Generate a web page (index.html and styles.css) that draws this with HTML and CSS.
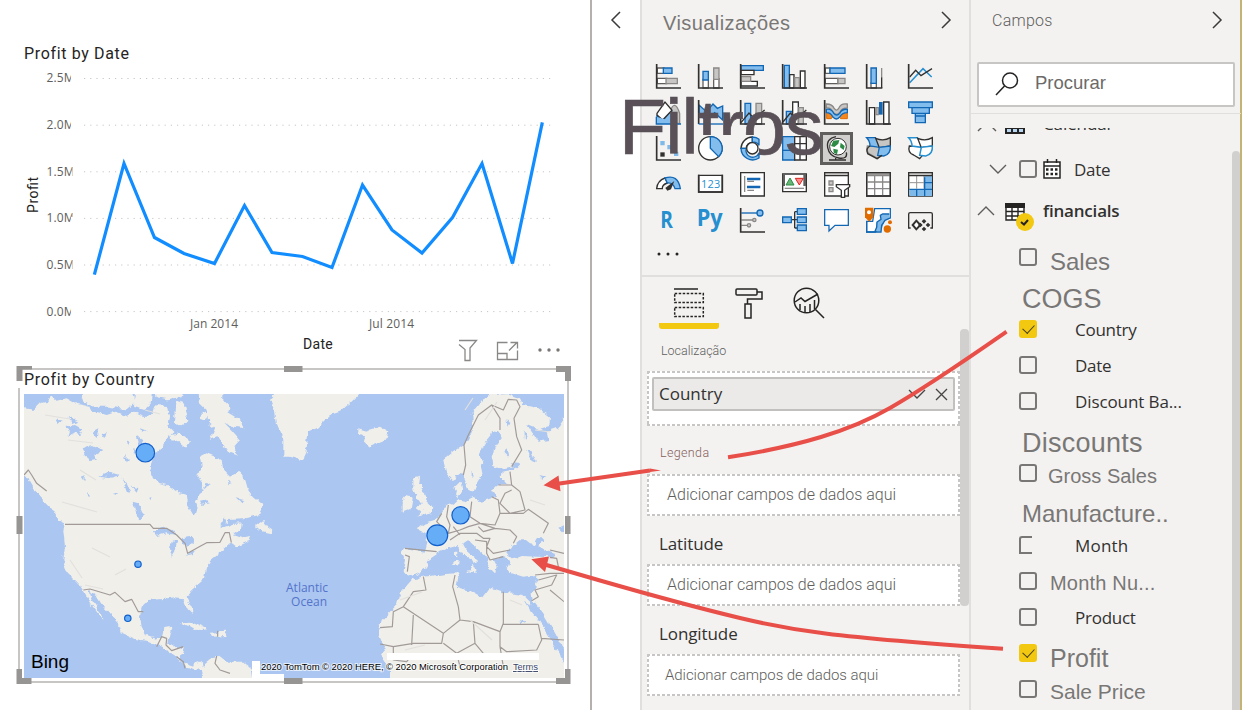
FILE: index.html
```html
<!DOCTYPE html>
<html lang="pt">
<head>
<meta charset="utf-8">
<title>Profit by Country</title>
<link rel="stylesheet" href="styles.css">
</head>
<body>
<div class="app">
<main class="canvas">
  <h2 class="visual-title">Profit by Date</h2>
  <svg class="chart" width="590" height="266" viewBox="0 66 590 266">
    <clipPath id="lab"><path d="M40 66h31v53h0v46h1.500v52h-1.500v35h1.500v22h-1.500v50h-31z"/></clipPath>
    <g class="grid"><path d="M84 78.500H554M84 125.200H554M84 171.800H554M84 218.400H554M84 265H554M84 311.600H554"/></g>
    <g class="tick" clip-path="url(#lab)">
      <text x="46.500" y="82" textLength="28">2.5M</text><text x="46.500" y="129" textLength="28">2.0M</text><text x="46.500" y="176" textLength="28">1.5M</text><text x="46.500" y="222" textLength="28">1.0M</text><text x="46.500" y="269" textLength="28">0.5M</text><text x="46.500" y="316" textLength="28">0.0M</text>
    </g>
    <g class="tick"><text x="190" y="328" textLength="48">Jan 2014</text><text x="369" y="328" textLength="45">Jul 2014</text></g>
    <text class="axis" transform="translate(38 213) rotate(-90)" textLength="36">Profit</text>
    <path class="series" d="M94.800 273L124 163.500 154.500 237.500 184 253.500 214.500 263.500 244.500 205.500 272 252.500 302.500 256.500 332 267.500 362.500 185 392 230 422 253 452.500 217.500 482 163.500 512.500 263.500 542 124"/>
  </svg>
  <div class="visual-foot">
    <span class="axis-title">Date</span>
    <span class="visual-tools">
      <svg width="20" height="24" viewBox="0 0 20 24"><path d="M1 2.500H18.500L12 10V22.500H7V11.500L1 6.500"/></svg>
      <svg width="24" height="24" viewBox="0 0 24 24"><path d="M11.500 4.500H1.500V21.500H21.500V12.500M1.500 15.500H11V21.500M13 12.500L21 4.500M14.500 4.500H21.500V10.500"/></svg>
      <svg class="dots" width="24" height="24" viewBox="0 0 24 24"><circle cx="2" cy="12" r="1.700"/><circle cx="11" cy="12" r="1.700"/><circle cx="20" cy="12" r="1.700"/></svg>
    </span>
  </div>
  <section class="map-visual">
    <h2 class="map-title">Profit by Country</h2>
    <svg class="map" width="540" height="284" viewBox="24 394 540 284">
      <defs><filter id="rough" x="-5%" y="-5%" width="110%" height="110%" color-interpolation-filters="sRGB"><feTurbulence type="fractalNoise" baseFrequency=".14" numOctaves="3" seed="4"/><feDisplacementMap in="SourceGraphic" scale="6" xChannelSelector="R" yChannelSelector="G"/></filter></defs>
      <rect class="sea" x="24" y="394" width="540" height="284"/>
      <g filter="url(#rough)">
      <g transform="translate(10 360) scale(.33333)">
        <path class="land" d="M30 140L70 150 90 130 110 125 125 108 140 122 170 115 200 132 240 140 245 152 290 165 320 155 350 168 370 155 400 168 425 165 440 135 470 138 480 170 475 200 490 215 470 240 455 265 435 280 420 320 425 350 445 372 480 380 510 400 530 405 535 440 550 465 560 450 555 420 575 400 580 370 565 350 575 320 570 290 590 280 615 290 635 300 640 330 660 350 685 335 700 350 710 385 730 410 760 435 750 465 700 478 655 480 630 505 670 492 692 490 690 510 670 525 700 535 720 530 715 545 680 560 664 548 640 570 600 600 590 630 585 655 545 690 530 710 545 740 548 762 530 745 520 715 490 712 460 717 415 720 395 740 390 770 395 800 410 825 440 835 455 830 462 805 487 800 480 830 470 850 490 862 522 860 512 890 515 905 550 917 575 905 580 925 565 930 530 920 500 890 470 870 430 850 380 840 335 820 330 800 300 765 270 730 255 705 235 692 245 720 265 750 287 782 270 768 245 735 225 700 205 670 175 640 160 600 165 560 160 510 165 490 145 480 120 440 90 410 70 385 50 350 30 345Z"/>
        <path class="land" d="M215 110L225 90H365L375 125 350 148 300 140 250 140 220 125ZM375 90H430L425 125 400 150 372 140ZM500 125L525 135 535 180 515 200 495 190 497 150ZM575 155L592 160 590 178 575 175ZM480 225L510 220 540 245 530 262 505 240 485 245ZM435 90H520L515 112 470 118 440 112ZM565 90H640L640 120 665 145 650 155 690 180 705 205 670 200 640 185 670 215 690 240 670 262 690 285 650 270 625 230 600 240 615 205 595 190 590 150 570 130ZM735 500L760 480 775 500 790 510 785 520 750 512ZM805 90H880V300L860 295 830 260 800 190 795 150 780 120ZM510 787L540 785 592 808 570 810 530 797ZM600 818L645 815 650 828 605 830ZM575 920L600 900 625 885 650 905 700 905 725 925 730 960H580ZM385 178L430 172 440 188 395 196Z"/>
        <path class="lake" d="M165 200L195 195 218 208 210 225 190 220 175 228 180 212ZM215 265L245 255 280 270 255 285 260 300 235 303 225 285ZM245 215L265 205 260 235ZM265 350L300 335 335 345 300 355ZM335 350L350 370 362 400 350 395ZM365 380L385 385 380 398ZM368 425L385 430 402 465 385 480 375 450ZM430 515L460 500 485 510 500 525 470 520 440 528ZM485 545L505 540 495 575 485 590 480 565ZM515 535L545 530 552 550 530 560 520 550ZM520 588L560 570 550 582ZM570 425L595 420 600 430 575 435ZM640 470L648 480 645 500 635 495ZM680 415L702 420 695 430ZM175 170L205 185 190 192ZM135 175L158 182 145 195ZM380 225L400 240 390 262ZM345 285L360 300 350 310ZM275 220L290 212 285 235ZM230 400L240 405 235 410ZM310 400L325 402 315 408ZM600 375L590 368 580 385ZM655 360L665 372 655 376ZM350 240L362 248 356 262ZM390 205L410 212 396 218ZM415 412L425 408 422 420ZM370 265L382 275 372 285ZM215 350L228 345 222 360Z"/>
      </g>
      <g transform="translate(290 360) scale(.33333)">
        <path class="land" d="M-20 90H220L180 130 150 155 120 165 80 205 55 215 50 265 35 300 0 290 -20 290ZM205 205L230 212 270 200 295 215 290 240 240 260 222 245 225 230 205 220ZM370 355L390 350 388 370 398 375 392 390 405 400 410 425 430 440 425 460 380 470 395 455 380 445 392 430 380 410 370 390ZM335 425L350 405 368 410 362 445 335 455Z"/>
        <path class="land" d="M840 165L822 175 800 205 770 215 775 240 745 245 725 215 712 195 745 208 778 198 780 172 745 145 700 135 690 115 660 102 605 105 580 115 560 140 545 160 550 195 535 235 525 250 490 275 460 300 470 345 485 360 505 350 520 338 525 360 535 390 550 395 560 370 575 345 570 320 580 310 567 285 585 250 605 225 610 210 630 215 635 235 615 260 605 290 610 315 640 325 690 315 665 330 635 335 632 355 650 375 625 375 605 390 615 410 575 425 545 412 520 425 503 420 505 405 490 385 510 365 517 385 500 425 490 435 475 430 455 460 430 480 400 490 380 505 408 520 412 550 405 575 345 565 335 580 345 600 338 635 365 650 385 640 410 625 415 600 440 583 450 573 480 560 500 555 515 580 545 600 560 630 553 640 545 630 550 612 570 605 530 570 520 550 535 540 555 560 590 590 595 620 615 640 620 620 610 600 640 590 660 602 650 625 665 640 700 650 735 645 745 660 725 700 730 720 760 760 790 810 820 865 840 870V960H300V930L275 890 285 870 265 820 275 780 320 735 330 700 370 655 400 650 470 642 500 640 505 650 500 680 550 695 580 712 600 685 640 698 700 705 720 725 740 770 770 810 790 855 822 905 840 905V165ZM530 632L550 630 548 640 530 635ZM493 600L503 600 502 615 493 615ZM495 575H502V592L495 590Z"/>
        <path class="lake" d="M650 582L665 555 685 538 705 538 720 550 735 552 745 535 765 535 745 558 775 575 800 582 785 592 740 590 700 588 665 595ZM805 500L830 490V525ZM665 310L690 312 680 325ZM712 270L725 275 738 305 725 300ZM745 345L765 350 760 360ZM640 275L650 265 655 290ZM700 208L710 225 702 240ZM705 722L725 735 750 775 785 825 822 880V900L795 860 760 800 725 755ZM690 780L705 785 695 790ZM545 330L552 345 545 352ZM650 180L658 190 652 200Z"/>
      </g></g>
      <g class="border" transform="translate(10 360) scale(.33333)"><path d="M42 345L55 330 65 345 80 370 110 393M165 493H420L430 505 470 505 500 525 525 550 533 580 565 562 590 548 630 547 645 518 658 518 664 548M220 690L240 687 300 705 315 697 345 725 365 718 385 755H400M440 860L455 830 470 835 468 855 485 872 520 860M500 890L520 905 525 925M620 888L615 910 630 930 660 940M623 812V830"/></g>
      <g class="border" transform="translate(290 360) scale(.33333)"><path d="M520 345L527 315 522 255 535 225 550 195 565 165 605 135 630 175 630 210M605 135L640 150 655 118 680 120 690 140 672 175 680 230 695 270 665 320M660 335L665 375 625 375M665 375L690 395 705 450 660 460 630 430 645 400 665 390M605 410L625 420 630 460 615 495 570 490 540 470 545 425M630 460L700 460 715 448 775 490 760 520M475 435L470 470 480 495 475 520 440 485 455 460M475 520L510 510 535 500 570 490 615 505 660 510 680 530 670 550M480 540L510 520 560 520 580 535 600 535 590 560 610 580 660 570M555 540L590 545 590 580 600 600 640 590M490 500L510 525M565 500L580 515 615 505M345 565L440 575M345 585L358 590 352 635M400 650L408 690 370 695 340 740 310 755 307 800 270 803M340 740L460 820 510 780 505 740 488 680 495 645M510 780L550 785 630 815 640 790V695M640 793H745M630 815V860L640 920M460 820L455 850 370 850 310 860 270 852M370 765L365 855M550 785L555 850 500 880 460 850M745 793L755 840 740 870 650 875 630 860M780 570L822 580M780 592L800 595 805 620 822 635M735 645L780 640 822 640M745 660L800 645 785 675 735 690 745 710 725 722M780 690L822 725M755 835L822 840M500 880L510 920M555 850L580 880 640 885M310 860V900L350 905 370 880"/></g>
      <g class="terrain"><path d="M70 560l12 18M92 548l18 9M85 585l18 4M62 502l35 10M80 470l16 10M68 440l25 3M45 415l25 4M115 575l11-6M145 410l15 4M465 410l8-12M535 430l15 2M485 420l12-18M530 500l15 5M400 600l22-8M470 620l22 20M405 650l20-5M510 600l12 5"/></g>
      <g class="bubble"><circle cx="145.300" cy="452.700" r="9.300"/><circle cx="138" cy="564.200" r="3.200"/><circle cx="127.800" cy="618.300" r="3.200"/><circle cx="460.600" cy="515.300" r="8.700"/><circle cx="437.300" cy="535.300" r="10.400"/></g>
      <text class="ocean" x="286" y="592" textLength="42">Atlantic</text><text class="ocean" x="291" y="606" textLength="36">Ocean</text>
      <text class="bing" x="31" y="668" textLength="38">Bing</text>
      <path class="patch" d="M252 661h8v13h24v4h-32zM387 653h152v7h-152z"/>
      <text class="credit" x="261" y="670" textLength="247">2020 TomTom © 2020 HERE, © 2020 Microsoft Corporation</text>
      <text class="credit terms" x="513" y="670" textLength="25">Terms</text>
    </svg>
    <svg class="handles" width="556" height="320" viewBox="16 365 556 320"><path class="mask" d="M18 371.500h4v16.500h-4z"/><path d="M16.500 366H32v3.500H22.500V381H16.500ZM284 366h18.500v6H284ZM556 366h15v15h-6v-9h-9ZM16.500 516H22.500v18h-6ZM565 516h5.500v18H565ZM16.500 669H22v9H31.500v6H16.500ZM284 678h18.500v6H284ZM565 669h5.500v15H556v-6h9Z"/></svg>
  </section>
</main>

<aside class="filter-rail">
  <svg width="12" height="18" viewBox="0 0 12 18"><path class="chev" d="M10 1L2 9 10 17"/></svg>
  <span class="filter-title">Filtros</span>
</aside>

<section class="viz">
  <header class="viz-head"><h1>Visualizações</h1><svg width="12" height="18" viewBox="0 0 12 18"><path class="chev" d="M2 1L10 9 2 17"/></svg></header>
  <div class="icons">
    <svg viewBox="0 0 75 75"><path class="w" d="M4 12h20v16H4zM4 43h28v16H4z"/><path class="b" d="M22 12h26v16H22z"/><path class="g" d="M30 43h34v16H30z"/><path class="ax" d="M2 0V72H75"/></svg>
    <svg viewBox="0 0 75 75"><path class="w" d="M15 46h16v26H15zM47 44h16v28H47z"/><path class="b" d="M15 22h16v26H15z"/><path class="g" d="M47 12h16v34H47z"/><path class="ax" d="M2 0V72H75"/></svg>
    <svg viewBox="0 0 75 75"><path class="b" d="M3 5h67v14H3z"/><path class="w k" d="M3 19h39v13H3zM3 52h49v14H3z"/><path class="g" d="M3 38h29v14H3z"/><path class="ax" d="M2 0V72H75"/></svg>
    <svg viewBox="0 0 75 75"><path class="b" d="M7 4h15v68H7z"/><path class="w k" d="M23 32h13v40H23zM55 21h14v51H55z"/><path class="g" d="M38 41h14v31H38z"/><path class="ax" d="M2 0V72H75"/></svg>
    <svg viewBox="0 0 75 75"><path class="w" d="M4 12h14v16H4zM4 43h38v16H4z"/><path class="b" d="M18 12h45v16H18z"/><path class="g" d="M42 43h21v16H42z"/><path class="ax" d="M2 0V72H75"/></svg>
    <svg viewBox="0 0 75 75"><path class="w" d="M15 57h16v15H15z"/><path class="b" d="M15 12h16v46H15z"/><path class="g" d="M47 12v28"/><path class="k" fill="none" d="M47 40v32"/><path class="ax" d="M2 0V72H49"/></svg>
    <svg viewBox="0 0 75 75"><path class="ln" d="M5 56L45 14 71 39"/><path class="k" fill="none" d="M5 39L23 19 39 35 72 14"/><path class="ax" d="M2 0V72H75"/></svg>

    <svg viewBox="0 0 75 75"><path class="g" d="M42 70V35Q56-5 71 40V70Z"/><path class="b" d="M3 48L20 62 45 32 58 50V70H3Z"/><path class="w k" d="M3 40L27 6 48 31 20 60 3 45Z"/><path class="b" fill="none" d="M1 50V72H75"/></svg>
    <svg viewBox="0 0 75 75"><path class="b" d="M3 15L25 35 45 12 58 25 74 18V60L50 38 25 62 3 43Z"/><path class="ax" d="M2 0V72"/><path class="bln" d="M2 72H75"/></svg>
    <svg viewBox="0 0 75 75"><path class="b" d="M15 10h17v62H15z"/><path class="g" d="M48 10h17v30H48z"/><path class="w" d="M48 40h17v32H48z"/><path class="k" fill="none" d="M3 68L27 39 43 56 74 30"/><path class="ax" d="M2 0V72H75"/></svg>
    <svg viewBox="0 0 75 75"><path class="b" d="M13 34h17v38H13z"/><path class="w k" d="M32 6h17v66H32z"/><path class="g" d="M50 23h14v49H50z"/><path class="k" fill="none" d="M3 66L25 39 42 57 73 30"/><path class="ax" d="M2 0V72H75"/></svg>
    <svg viewBox="0 0 75 75"><path fill="#f5871f" stroke="#e06c00" stroke-width="3" d="M8 36h18l6 6-10 14H8zM52 38l18-2v20H50l-8-8z"/><path class="g" d="M7 12q18 0 24 14 8 10 15-4 5-13 24-10v12q-16 0-22 12-10 14-22 0-5-13-19-12z"/><path class="b" d="M7 28q15-3 22 12 9 10 18 0 7-14 23-12v10q-15 0-22 12-11 14-22 0-6-12-19-12z"/><path class="ax" d="M2 0V72H75"/></svg>
    <svg viewBox="0 0 75 75"><path class="w k" d="M10 23h16v49H10zM53 6h16v66H53z"/><path class="g" d="M30 23h7v21h-7z"/><path fill="#1267b4" d="M39 6h11v38H39z"/><path class="ax" d="M2 0V72H75"/></svg>
    <svg viewBox="0 0 75 75"><path class="b" d="M2 6h71v17H2zM12 23h52v17H12zM22 48h30v20H22zM22 40h30v8H22z"/></svg>

    <svg viewBox="0 0 75 75"><path fill="#7fb9e9" d="M13 15h13v13H13zM34 27h13v13H34zM54 47h13v13H54z"/><path fill="#323130" d="M13 49h13v13H13z"/><path class="ax" d="M2 0V72H75"/></svg>
    <svg viewBox="0 0 75 75"><circle class="w k" cx="37" cy="37" r="35"/><path class="b" d="M37 2A35 35 0 0 1 62 62L37 37Z"/></svg>
    <svg viewBox="0 0 75 75"><path class="w k" d="M3 37A35 35 0 0 1 37 3V19A18 18 0 0 0 19 37Z"/><path class="b" d="M37 3Q50 3 57 10V28A18 18 0 0 0 37 19ZM3 37H19A18 18 0 0 0 57 50V66A35 35 0 0 1 3 37Z"/><circle class="w k" cx="37" cy="37" r="17"/></svg>
    <svg viewBox="0 0 75 75"><path class="b" d="M2 2h36v70H2z"/><path class="w k" d="M38 2h35v70H38zM54 2v70M38 23h35M38 48h35"/><path class="b" d="M2 43h36"/></svg>
    <span class="picked"><svg viewBox="0 0 75 75"><circle fill="#fff" stroke="#323130" stroke-width="3" cx="42" cy="32" r="25"/><path fill="#2e8b45" d="M28 14l18-2-3 11-12 10-10-3zM50 20l12 10-3 12-11-8zM28 38l14 3-3 14-10-5z"/><path class="k" fill="none" d="M36 2Q6 8 11 35T44 66 67 49M35 66v6M15 72H66"/></svg></span>
    <svg viewBox="0 0 75 75"><path class="g" d="M4 30Q-2 50 17 57L35 68 46 55 45 32Z"/><path class="b" d="M2 5H28Q40 18 40 34L12 30Q12 15 2 5Z"/><path class="g k" d="M29 7Q53 17 73 5V30L40 35Z"/><path class="b" d="M40 34L73 30Q75 55 53 60L35 58Z"/><path class="k" fill="none" d="M12 30Q-2 38 5 53L33 68 48 58"/></svg>
    <svg viewBox="0 0 75 75"><path class="w k" d="M4 30Q-2 50 17 57L35 68 46 55 45 32Z"/><path class="w ln" d="M2 5H28Q40 18 40 34L12 30Q12 15 2 5Z"/><path class="w k" d="M29 7Q53 17 73 5V30L40 35Z"/><path class="w ln" d="M40 34L73 30Q75 55 53 60L35 58Z"/></svg>

    <svg viewBox="0 0 75 75"><path class="w k" d="M2 50Q4 26 27 18L34 33Q18 38 19 50Z"/><path class="b" d="M27 18Q66 6 73 50H57Q51 31 34 33Z"/><path fill="#323130" d="M28 48L55 27 45 52 34 56Z"/></svg>
    <svg viewBox="0 0 75 75"><path class="w k" d="M2 10h71v50H2z"/><path class="ax" d="M0 60h75M2 8v54M73 8v54"/><text class="num" x="9" y="48" textLength="58">123</text></svg>
    <svg viewBox="0 0 75 75"><path class="w k" d="M2 2h71v70H2z"/><path class="g" d="M14 12v48M22 28h20M22 55h20"/><path stroke="#1267b4" stroke-width="7" d="M21 21h40M21 45h40"/></svg>
    <svg viewBox="0 0 75 75"><path class="w k" d="M2 6h71v53H2z"/><path fill="#605e5c" d="M64 6h8v36h-8zM2 6h7v36H2z"/><path fill="#69b578" stroke="#2e8b45" stroke-width="3" d="M12 39L24 18 36 39Z"/><path fill="#ff8b8b" stroke="#d6231c" stroke-width="3" d="M40 19H64L52 39Z"/><path class="g" d="M8 49H66"/></svg>
    <svg class="wide" viewBox="0 0 78 78"><path class="w k" d="M2 2h71v70H2z"/><path class="g k" d="M2 2h71v9H2z"/><path class="g" d="M15 27h12v12H15zM15 47h12v12H15z"/><path class="w k" d="M37 38H77V44L62 55V76H52V55L37 44Z"/></svg>
    <svg viewBox="0 0 75 75"><path class="w k" d="M2 2h71v70H2z"/><path class="g" d="M4 30h68M4 50h68M26 12v60M50 12v60M2 6h70v5H2z"/><path class="k" fill="none" d="M2 2h71v70H2z"/></svg>
    <svg viewBox="0 0 75 75"><path class="w k" d="M2 2h71v70H2z"/><path fill="#7fb9e9" d="M48 12h24v60H4V51H48z"/><path fill="none" stroke="#979593" stroke-width="3" d="M4 32h45M26 12v38M48 12v38"/><path class="bln" d="M50 16v56M26 52v20M4 52h68M50 32h22"/><path class="g k" d="M2 2h71v9H2z"/></svg>

    <svg viewBox="0 0 75 75"><text class="code" x="13" y="61" textLength="38" lengthAdjust="spacingAndGlyphs">R</text></svg>
    <svg viewBox="0 0 75 75"><text class="code" x="-4" y="53" textLength="78" lengthAdjust="spacingAndGlyphs">Py</text></svg>
    <svg viewBox="0 0 75 75"><path class="bln" d="M4 15H52"/><path class="g" d="M4 36H40M4 52H22"/><circle class="b" cx="60" cy="15" r="9"/><circle class="g" cx="43" cy="36" r="5"/><circle class="g" cx="27" cy="52" r="5"/><path class="ax" d="M2 0V72H75"/></svg>
    <svg viewBox="0 0 75 75"><path class="k" fill="none" d="M28 35H46M38 11V60M38 11h10M38 60h10"/><path class="b" d="M2 27h26v17H2zM46 2h27v17H46zM46 27h27v17H46zM46 51h27v17H46z"/></svg>
    <svg viewBox="0 0 75 75"><path class="w blue-line" d="M2 5H73V52H33L15 69V52H2Z"/></svg>
    <svg viewBox="0 0 75 75"><path class="w blue-line" d="M26 2H73V30L55 35 48 52 28 72H2V40H20Z"/><path fill="#7fb9e9" d="M70 18L43 20 46 35 32 42 30 70H45L55 38 72 30Z"/><path class="bln" d="M70 18H50L43 22 45 34 33 42 32 58 27 70M72 30L57 37 47 52 45 72H2V40"/><path fill="#e06c00" d="M-3-1H22V28L10 41-3 28Z"/><circle cx="9" cy="13" r="6" fill="#fff"/><circle cx="64" cy="63" r="11" fill="#e06c00"/><circle cx="72" cy="43" r="6" fill="#e06c00"/></svg>
    <svg viewBox="0 0 75 75"><path class="k" fill="none" d="M8 60H2V18Q2 14 7 14H68Q73 14 73 18V60H67"/><path fill="#fff" stroke="#323130" stroke-width="6" d="M25 38L37 51 25 64 14 51Z"/><path fill="#323130" d="M48 33l7 7-7 7-7-7zM60 44l7 7-7 7-7-7zM48 56l7 7-7 7-7-7zM37 44l7 7-7 7-7-7z"/></svg>
    <svg viewBox="0 0 75 75"><g fill="#252423"><circle cx="9" cy="30" r="4.500"/><circle cx="36" cy="30" r="4.500"/><circle cx="63" cy="30" r="4.500"/></g></svg>
  </div>
  <nav class="tabs">
    <span class="tab on"><svg width="30" height="30" viewBox="0 0 30 30"><path d="M0 1H24"/><path stroke-dasharray="2.500 1.500" d="M.700 5.500H29.300V14.500H.700ZM.700 19.500H29.300V28.500H.700Z"/></svg></span>
    <span class="tab"><svg width="28" height="32" viewBox="0 0 28 32"><rect x="1" y="2" width="21" height="6" rx="1"/><path d="M22 5H27V12H12.500V17M10 17H16V31H10Z"/></svg></span>
    <span class="tab"><svg width="32" height="32" viewBox="0 0 32 32"><circle cx="13.500" cy="13.500" r="12.300"/><path d="M22.500 22.500L31 31M2 15L8 11 12 14.500 25 7M7 17V23M12 19V25M17 17V25M21.500 13V22"/></svg></span>
  </nav>
  <div class="wells">
    <div class="well-list">
      <h3 class="pt loc">Localização</h3>
      <div class="well tall"><div class="chip"><span>Country</span><svg width="42" height="16" viewBox="0 0 42 16"><path d="M2 4L10 12 18 4M29 3L40 14M40 3L29 14"/></svg></div></div>
      <h3 class="pt leg">Legenda</h3>
      <div class="well"><span>Adicionar campos de dados aqui</span></div>
      <h3>Latitude</h3>
      <div class="well"><span>Adicionar campos de dados aqui</span></div>
      <h3>Longitude</h3>
      <div class="well last"><span>Adicionar campos de dados aqui</span></div>
    </div>
    <div class="thumb"></div>
  </div>
</section>

<section class="fields">
  <header class="fields-head"><h1>Campos</h1><svg width="12" height="18" viewBox="0 0 12 18"><path class="chev" d="M2 1L10 9 2 17"/></svg></header>
  <div class="search"><svg width="26" height="26" viewBox="0 0 26 26"><circle cx="16" cy="9.500" r="7.500"/><path d="M10.500 15L2 24"/></svg><span>Procurar</span></div>
  <div class="tree-wrap">
    <div class="tree">
      <div class="cut"><svg class="arrow" width="20" height="20" viewBox="0 0 20 20"><path d="M1 11L10 2 19 11"/></svg><svg class="cut-grid" width="20" height="20" viewBox="0 0 20 20"><path fill="#b7d7f2" stroke="#252423" stroke-width="2" d="M1 1h18v18H1zM1 14h18M7 1v18M13 1v18"/></svg><span>Calendar</span></div>
      <div class="row date-table"><svg class="arrow" width="18" height="12" viewBox="0 0 18 12"><path d="M1 2L9 10 17 2"/></svg><i class="box"></i><svg width="18" height="20" viewBox="0 0 18 20"><path fill="#fff" stroke="#252423" stroke-width="1.500" d="M1 3h16v16H1zM1 7h16M4.500 0v4M13.500 0v4"/><path stroke="#252423" stroke-width="2.500" stroke-dasharray="2.500 2" d="M3 10.500h12M3 15h12"/></svg><span class="seg">Date</span></div>
      <div class="row table"><svg class="arrow" width="18" height="12" viewBox="0 0 18 12"><path d="M1 10L9 2 17 10"/></svg><span class="table-icon"><svg width="30" height="28" viewBox="0 0 30 28"><path fill="#fff" stroke="#252423" stroke-width="1.400" d="M1 1h18v16H1zM1 8.500h18M1 13h18M7 4v13M13 4v13"/><path fill="#252423" d="M0 0h20v5H0z"/><circle cx="20" cy="19" r="9" fill="#f2c811"/><path fill="none" stroke="#252423" stroke-width="2" d="M16 19l3 2.500 4-4.500"/></svg></span><b>financials</b></div>
      <div class="row"><i class="box"></i><span class="ar s24">Sales</span></div>
      <div class="row"><span class="ar s27 head">COGS</span></div>
      <div class="row"><i class="box checked"></i><span class="seg">Country</span></div>
      <div class="row"><i class="box"></i><span class="seg">Date</span></div>
      <div class="row"><i class="box"></i><span class="seg disc-ba">Discount Ba...</span></div>
      <div class="row"><span class="ar s27 head disc">Discounts</span></div>
      <div class="row"><i class="box"></i><span class="ar s20 gross">Gross Sales</span></div>
      <div class="row"><span class="ar s24 head manu">Manufacture..</span></div>
      <div class="row"><i class="box half"></i><span class="seg month">Month</span></div>
      <div class="row"><i class="box"></i><span class="ar s20 mnum">Month Nu...</span></div>
      <div class="row"><i class="box"></i><span class="seg">Product</span></div>
      <div class="row"><i class="box checked"></i><span class="ar s25">Profit</span></div>
      <div class="row"><i class="box"></i><span class="ar s21">Sale Price</span></div>
    </div>
    <div class="thumb"></div>
  </div>
</section>
<svg class="arrows" width="1242" height="710" viewBox="0 0 1242 710">
  <path d="M556 484L650 470.500M728 457.300C800 446 850 431 890 408S970 357 1006.500 331.700M543 564L600 580.500C640 592 690 606 740 618S830 637 1003 648.700"/>
  <path class="tip" d="M650 468.500V472L661 470.500ZM543.500 485.300L558.500 475.500 560.500 491.300ZM531.300 559.300L549 556.500 545 572Z"/>
</svg>
</div>
</body>
</html>
```

FILE: styles.css
```css
* { box-sizing: border-box; }
body { margin: 0; background: #fff; font-family: "Open Sans", "Noto Sans", sans-serif; color: #323130; }
h1, h2, h3 { margin: 0; font-weight: 400; }
svg { display: block; flex: none; overflow: visible; }
.app { position: relative; display: flex; width: 1242px; height: 710px; overflow: hidden; }

/* Report canvas */
.canvas { width: 592px; flex: none; border-right: 2px solid #b3b0ad; color: #252423; }
.visual-title { height: 66px; padding: 44px 0 0 24px; font: 16px/20px Roboto, sans-serif; letter-spacing: 0.65px; }
.grid path { stroke: #c8c6c4; stroke-width: 1; stroke-dasharray: 1.200 5; fill: none; }
.tick text { font: 12px "Open Sans", sans-serif; fill: #605e5c; }
.axis { font: 14px Roboto, sans-serif; fill: #252423; }
.series { fill: none; stroke: #118dff; stroke-width: 3.200; stroke-linejoin: miter; stroke-linecap: square; }
.visual-foot { display: flex; justify-content: space-between; height: 34px; padding: 4px 28px 0 303px; }
.axis-title { font: 14px/17px Roboto, sans-serif; letter-spacing: 0.300px; }
.visual-tools { display: flex; gap: 18px; padding-top: 2px; }
.visual-tools path { fill: none; stroke: #8a8886; stroke-width: 1.300; }
.visual-tools .dots { fill: #797775; }
.map-visual { position: relative; width: 551px; height: 315px; margin: 2px 0 0 18px; padding: 1px 0 0 4px; border: 2px solid #c8c6c4; }
.map-title { position: relative; z-index: 1; height: 23px; font: 16px/17px Roboto, sans-serif; letter-spacing: 0.700px; }
.map { overflow: hidden; }
.handles { position: absolute; left: -4px; top: -5px; fill: #979593; }
.handles .mask { fill: #fff; }
.sea, .lake { fill: #abc6f1; }
.land { fill: #f0efea; }
.border { fill: none; stroke: #a19a98; stroke-width: 3.500; stroke-linejoin: round; }
.terrain { fill: none; stroke: #e2e0dd; stroke-width: 1.200; }
.bubble { fill: #66adf8; stroke: #1260cc; stroke-width: 1.200; }
.ocean { font: 12px "Open Sans", sans-serif; fill: #5374ca; }
.bing { font: 19px "Liberation Sans", sans-serif; fill: #000; }
.patch { fill: #fff; }
.credit { font: 9.500px "Liberation Sans", sans-serif; fill: #000; paint-order: stroke; stroke: #ffffffb0; stroke-width: 2px; }
.terms { fill: #3c4668; text-decoration: underline; }

/* Collapsed filter pane */
.filter-rail { position: relative; width: 48px; flex: none; padding: 11px 0 0 18px; }
.chev { fill: none; stroke: #3b3a39; stroke-width: 1.500; }
.filter-title { position: absolute; z-index: 2; left: 27px; top: 83px; font: 77px/88px "Liberation Sans", sans-serif; letter-spacing: -0.850px; color: #595157; -webkit-text-stroke: 0.700px #595157; clip-path: polygon(0 0, 110% 0, 110% 100%, 140px 100%, 140px 52px, 77px 52px, 77px 100%, 0 100%); }

/* Visualizations pane */
.viz { width: 331px; flex: none; background: #f3f2f1; border-left: 2px solid #e1dfdd; border-right: 2px solid #e1dfdd; }
.viz-head { display: flex; justify-content: space-between; height: 64px; padding: 11px 17px 0 21px; }
.viz-head h1 { font: 20px/24px "Liberation Sans", sans-serif; letter-spacing: 0.42px; color: #797775; }
.icons { display: grid; grid-template-columns: repeat(7, 25px); grid-auto-rows: 25px; gap: 11px 17px; height: 213px; padding-left: 14px; border-bottom: 2px solid #e1dfdd; }
.icons svg { width: 25px; height: 25px; }
.icons .wide { width: 26px; height: 26px; }
.icons .picked { width: 33px; height: 33px; margin: -4px; padding: 1px; background: #d2d0ce; border: 3px solid #605e5c; }
.w { fill: #fff; stroke: #605e5c; stroke-width: 3.800; }
.b { fill: #83bdee; stroke: #1267b4; stroke-width: 4; }
.g { fill: #c8c6c4; stroke: #8a8886; stroke-width: 3.800; }
.k { stroke: #323130; stroke-width: 4; }
.ax { fill: none; stroke: #323130; stroke-width: 5; }
.ln { fill: none; stroke: #268fd0; stroke-width: 4.500; }
.w.ln { fill: #fff; }
.bln { fill: none; stroke: #1267b4; stroke-width: 4; }
.w.blue-line { stroke: #1267b4; }
.num { font: 33px "Open Sans", sans-serif; fill: #268fd0; }
.code { font: 700 68px "Open Sans", sans-serif; fill: #268fd0; }
.tabs { display: flex; height: 52px; padding: 0 17px; }
.tab { display: flex; justify-content: center; width: 60px; height: 52px; padding-top: 10px; }
.tab svg { fill: none; stroke: #252423; stroke-width: 1.500; }
.tab.on { padding-top: 11px; background: linear-gradient(#f2c811, #f2c811) 0 100% / 100% 6px no-repeat; border-radius: 3px; }
.wells { display: flex; height: 381px; }
.well-list { width: 319px; padding-left: 5px; }
.well-list h3 { height: 48px; padding: 14px 0 0 12px; font-size: 17px; line-height: 28px; letter-spacing: -0.100px; }
.well-list .pt { font: 300 12.500px/20px Roboto, sans-serif; color: #605e5c; letter-spacing: 0; }
.well-list .loc { height: 42px; padding: 12px 0 0 14px; }
.well-list .leg { padding: 17px 0 0 13px; color: #875f5c; letter-spacing: 0.350px; }
.well {
  --dash: #c8c6c4 0 3px, transparent 3px 5px;
  height: 42px; padding: 12px 0 0 20px; font: 300 16px/18px Roboto, sans-serif; letter-spacing: 0; color: #605e5c;
  background:
    repeating-linear-gradient(90deg, var(--dash)) 0 0 / 100% 2px no-repeat,
    repeating-linear-gradient(90deg, var(--dash)) 0 100% / 100% 2px no-repeat,
    repeating-linear-gradient(var(--dash)) 0 0 / 2px 100% no-repeat,
    repeating-linear-gradient(var(--dash)) 100% 0 / 2px 100% no-repeat,
    #fff;
}
.well.last { padding-left: 18px; font-size: 15px; letter-spacing: -0.050px; }
.well.tall { height: 55px; padding: 6px 5px 0; }
.chip { display: flex; align-items: center; justify-content: space-between; height: 34px; padding: 0 4px 0 5px; background: #ebeae9; border: 2px solid #c2c0be; border-radius: 2px; font: 17px "Open Sans", sans-serif; color: #323130; }
.chip span { margin-top: -2px; }
.chip path { fill: none; stroke: #484644; stroke-width: 1.300; }
.wells .thumb { width: 9px; height: 277px; border-radius: 4px; background: #d2d0ce; }

/* Fields pane */
.fields { width: 271px; flex: none; padding-left: 6px; background: #f3f2f1; border-right: 1px solid #d3b63e; box-shadow: inset -1px 0 #b3b0ad; }
.fields-head { display: flex; justify-content: space-between; height: 62px; padding: 11px 18px 0 15px; }
.fields-head h1 { font: 300 16px/19px Roboto, sans-serif; letter-spacing: 0.250px; color: #605e5c; }
.search { display: flex; width: 258px; height: 45px; padding: 7px 0 0 15px; gap: 15px; background: #fff; border: 2px solid #c8c6c4; border-radius: 2px; }
.search svg { fill: none; stroke: #252423; stroke-width: 1.500; }
.search span { font: 18.500px/24px "Liberation Sans", sans-serif; color: #6c6a68; }
.tree-wrap { display: flex; height: 597px; margin: 6px 0 0 -6px; border-top: 1px solid #e1dfdd; }
.tree { width: 261px; padding: 14px 0 0 6px; }
.tree-wrap .thumb { width: 8px; margin-top: 37px; background: #d2d0ce; border-radius: 4px 4px 0 0; }
.cut { display: flex; align-items: flex-end; height: 6px; overflow: hidden; }
.cut .arrow { margin-bottom: -6px; }
.cut-grid { margin-left: 8px; }
.cut span { margin-left: 18px; margin-bottom: -2px; font-size: 17px; line-height: 24px; letter-spacing: -0.100px; }
.arrow path { fill: none; stroke: #605e5c; stroke-width: 1.400; }
.row { display: flex; align-items: center; height: 36px; padding-left: 42px; white-space: nowrap; }
.date-table { margin-top: 17px; padding-left: 12px; }
.date-table .arrow { margin-right: 12px; }
.date-table .box + svg { margin-left: 6px; }
.date-table .seg { margin-left: 13px; }
.table { height: 52px; padding: 0 0 4px; }
.table-icon { margin: 11px 0 0 10px; }
.table b { margin: -2px 0 0 8px; font-size: 17px; font-weight: 600; letter-spacing: -0.200px; }
.box { position: relative; flex: none; width: 18px; height: 18px; border: 2px solid #797775; border-radius: 3px; }
.box.checked { background: #f2c811; border-color: #f2c811; }
.box.checked::after { content: ""; position: absolute; left: 2px; top: 2px; width: 10px; height: 6px; border: solid #484020; border-width: 0 0 1.500px 1.500px; transform: rotate(-47deg); }
.box.half { width: 13px; margin-right: 5px; border-right: 0; border-radius: 3px 0 0 0; }
.seg { margin-left: 38px; font-size: 17px; letter-spacing: -0.250px; padding-top: 1px; }
.disc-ba { letter-spacing: -0.100px; }
.month { letter-spacing: 0.200px; }
.ar { margin-left: 13px; padding-top: 9px; font-family: "Liberation Sans", sans-serif; color: #797775; }
.ar.head { margin-left: 3px; padding-top: 13px; }
.ar.manu { padding-top: 9px; }
.s20 { font-size: 20px; padding-top: 6px; }
.s21 { font-size: 21px; padding-top: 5px; }
.s24 { font-size: 24px; }
.s25 { font-size: 25px; padding-top: 11px; }
.s27 { font-size: 27px; }
.gross { margin-left: 11px; }
.disc { letter-spacing: 0.250px; }
.mnum { letter-spacing: 0.200px; padding-top: 4px; }

/* Callout arrows across the panes */
.arrows { position: absolute; inset: 0; z-index: 3; pointer-events: none; fill: none; stroke: #e94f49; stroke-width: 4; }
.arrows .tip { fill: #e94f49; stroke: none; }
```
